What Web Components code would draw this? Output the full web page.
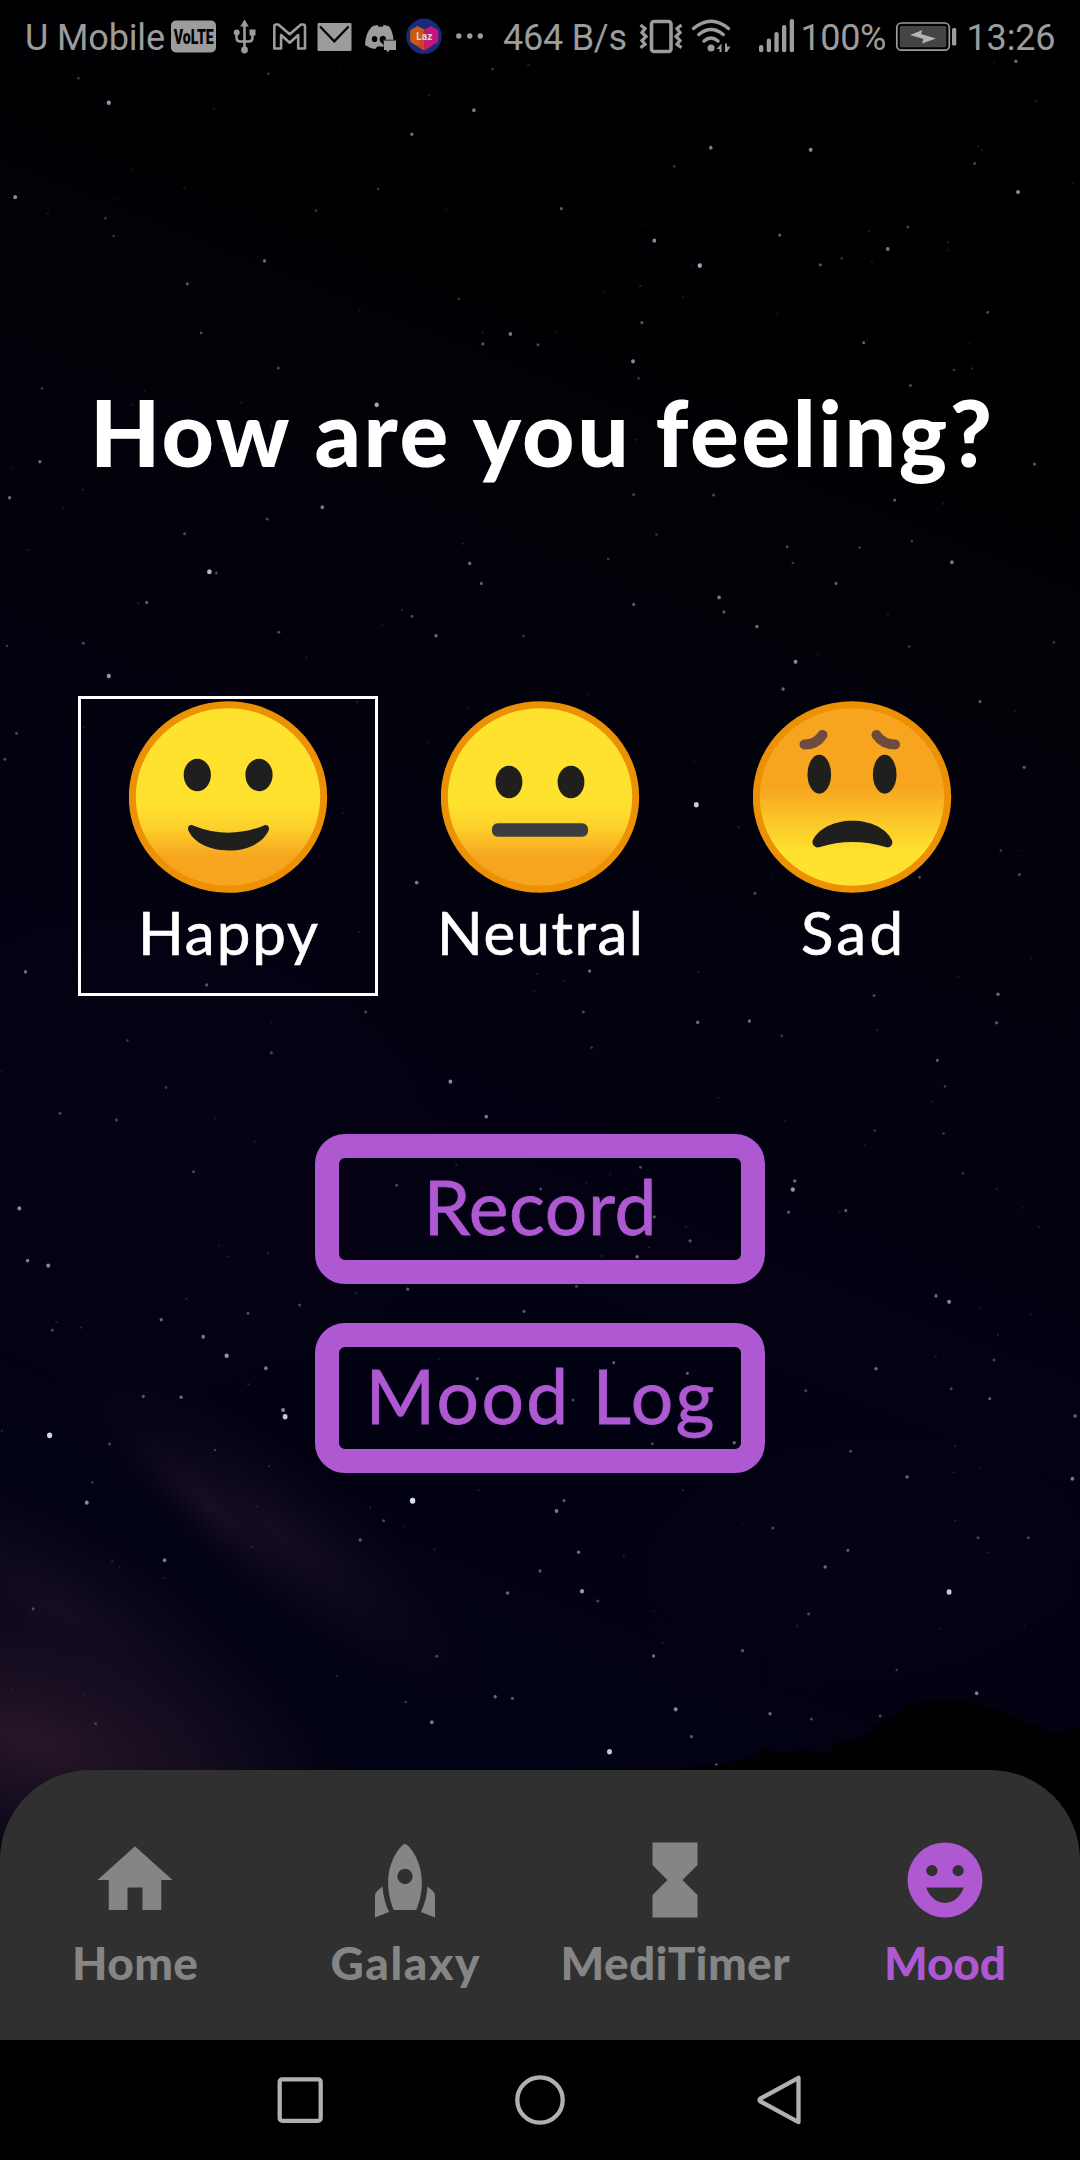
<!DOCTYPE html>
<html lang="en">
<head>
<meta charset="utf-8">
<title>Mood</title>
<style>
html,body{margin:0;padding:0;background:#000}
body{width:1080px;height:2160px;overflow:hidden;font-family:Lato,"Open Sans",sans-serif}
</style>
</head>
<body>
<mood-app></mood-app>
<script>
const define = (name, html, setup) => customElements.define(name, class extends HTMLElement {
  connectedCallback() {
    if (this.shadowRoot) return;
    const root = this.attachShadow({ mode: 'open' });
    root.innerHTML = typeof html === 'function' ? html(this) : html;
    if (setup) setup(this, root);
  }
});

// Tracks its text out (or in) so that the line takes exactly the given width.
define('fit-text', `
<style>
:host{display:inline-block;white-space:nowrap;flex:none}
</style><slot></slot>`, el => {
  const target = +el.getAttribute('width');
  const n = el.textContent.length;
  const ls = (target - el.getBoundingClientRect().width) / (n - 1);
  el.style.letterSpacing = ls + 'px';
  el.style.marginRight = -ls + 'px';
});

// Night sky: each band is [top, vertical scale, stars as x,y,brightness].
const BANDS = [
  [60, 2.529, [158,108,9, 22,347,8, 688,127,7, 598,188,6, 1032,222,7, 1177,227,8, 1478,334,8, 1415,262,4, 1475,3,6, 950,457,8, 1016,520,10, 1132,443,5, 1289,478,7, 1191,518,5, 1222,502,3, 1318,422,4, 384,508,6, 272,566,5, 292,690,4, 404,779,4, 701,718,5, 741,693,7, 781,720,4, 932,664,5, 919,762,8, 927,805,3, 1254,715,5, 1434,638,4, 547,872,10, 61,831,3, 58,1016,6, 14,1107,6, 468,1131,7, 388,1161,4, 268,1198,4, 304,1294,11, 314,1297,4, 213,1372,5, 682,1273,6, 699,1324,5, 1044,1359,7, 1051,1396,5, 920,1377,5, 1099,1433,6, 1382,1270,7, 1214,1324,5, 1143,1231,4, 1155,1522,8, 158,1558,9, 633,1456,6, 121,1475,4, 405,1447,4, 598,1407,4, 760,1457,3, 1299,1113,5, 1036,1100,4, 920,1099,4, 1502,1022,5, 815,376,5, 549,326,3, 459,381,3, 153,400,3, 165,445,3, 114,46,3, 390,35,3, 715,23,3, 979,269,3, 666,604,3, 1322,823,4, 1385,784,3, 883,1262,3, 953,1200,3, 1151,1272,3, 1248,1233,3, 1324,1217,3, 1530,1473,3, 1320,1483,3, 10,1482,3]],
  [660, 2.376, [1137,69,6, 1423,99,5, 1011,344,12, 605,529,7, 1487,255,5, 1453,453,3, 1480,510,4, 1335,516,4, 1096,554,4, 24,174,4, 7,236,4, 37,741,6, 300,772,5, 531,836,4, 856,739,6, 847,836,4, 1013,861,6, 1088,858,6, 1135,893,3, 1269,797,4, 1449,794,6, 1447,862,5, 1361,951,5, 1372,1013,3, 654,1002,8, 706,1085,7, 87,1077,4, 169,1093,4, 281,1216,4, 394,933,4, 241,1016,3, 28,1303,8, 40,1427,7, 70,1439,8, 1154,1238,6, 1151,1258,9, 1145,1312,5, 1228,1308,5, 930,1205,4, 785,1257,4, 576,1248,4, 950,1323,5, 1002,1380,5, 925,1418,6, 592,1495,5, 837,1488,4, 1359,1511,6, 1378,1525,8, 1270,1118,3, 1370,1125,3, 1398,1220,3, 185,904,3, 859,921,3]],
  [1300, 3, [761,34,5, 234,59,6, 76,91,4, 295,110,7, 329,167,9, 386,205,7, 208,289,5, 263,292,6, 411,330,8, 414,350,12, 72,406,13, 126,608,8, 159,432,4, 599,602,14, 819,602,5, 808,633,7, 557,662,4, 523,720,5, 239,781,7, 840,757,6, 784,813,5, 737,879,6, 845,874,9, 868,903,4, 1378,876,12, 1198,801,6, 1231,751,5, 1122,684,4, 1420,713,4, 1493,713,4, 1317,531,6, 1557,536,7, 1272,206,6, 1443,180,4, 1437,296,5, 1381,266,4, 1170,272,4, 1235,454,4, 1561,348,6, 1174,942,4, 1078,1052,5, 949,1068,6, 634,1069,4, 48,926,4, 719,1190,6, 744,1195,5, 627,1267,7, 885,1355,12, 981,1228,8, 1118,1241,6, 1178,1257,4, 1004,1310,5, 1040,1396,6, 1418,1180,7, 1278,1248,4, 589,1206,3, 139,1271,3, 891,188,5, 998,220,5, 693,236,5, 832,300,4, 778,318,6, 1066,428,6, 947,431,4, 360,40,4, 435,15,4, 134,547,3, 312,450,3, 1302,1110,3]]
];
const sky = () => {
  let s = '', seed = 7;
  const rnd = () => (seed = (seed * 16807) % 2147483647) / 2147483647;
  for (let i = 0; i < 150; i++)
    s += `<circle cx="${(rnd()*1080).toFixed(1)}" cy="${(60+rnd()*1640).toFixed(1)}" r="1.2" fill="#aab" opacity="${(.08+rnd()*.12).toFixed(2)}"/>`;
  for (const [top, k, list] of BANDS)
    for (let i = 0; i < list.length; i += 3) {
      const b = list[i+2], x = (list[i]/1.4519).toFixed(1), y = (top + list[i+1]/k).toFixed(1);
      s += `<ellipse cx="${x}" cy="${y}" rx="${(.9+b*.13).toFixed(2)}" ry="${(.9+b*.15).toFixed(2)}" fill="#dfe0ee" opacity="${Math.min(1,.05+b*.07).toFixed(2)}"/>`;
    }
  return s;
};
define('night-sky', () => `
<style>:host{display:block}svg{display:block}</style>
<svg width="1080" height="2160" viewBox="0 0 1080 2160">
<defs>
<linearGradient id="b" x1=".6" y1="0" x2=".4" y2="1"><stop offset="0" stop-color="#000"/><stop offset=".15" stop-color="#010104"/><stop offset=".36" stop-color="#02020d"/><stop offset=".55" stop-color="#030112"/><stop offset=".8" stop-color="#010213"/></linearGradient>
<radialGradient id="p"><stop offset="0" stop-color="#2a172a" stop-opacity=".95"/><stop offset=".5" stop-color="#1e1124" stop-opacity=".65"/><stop offset="1" stop-color="#120a20" stop-opacity="0"/></radialGradient>
<radialGradient id="q"><stop offset="0" stop-color="#1c1029" stop-opacity=".75"/><stop offset="1" stop-color="#140a22" stop-opacity="0"/></radialGradient>
<radialGradient id="v"><stop offset="0" stop-color="#080316" stop-opacity=".7"/><stop offset="1" stop-color="#060216" stop-opacity="0"/></radialGradient>
</defs>
<rect width="1080" height="2160" fill="url(#b)"/>
<ellipse cx="150" cy="1160" rx="330" ry="300" fill="url(#v)"/>
<ellipse cx="850" cy="1570" rx="260" ry="140" fill="url(#v)"/>
<ellipse cx="280" cy="1535" rx="270" ry="75" fill="url(#q)" transform="rotate(38 280 1535)"/>
<ellipse cx="210" cy="1505" rx="120" ry="30" fill="url(#q)" transform="rotate(42 210 1505)"/>
<ellipse cx="60" cy="1610" rx="300" ry="100" fill="url(#q)" transform="rotate(30 60 1610)"/>
<ellipse cx="30" cy="1740" rx="360" ry="150" fill="url(#p)" transform="rotate(16 30 1740)"/>
${sky()}
<path d="M670 1775l19-8 30-2 35-8 10-9 14 5 14-1 16-2 22 5 7-12 14-2 13-5 11-10 20-10 12-11 16-3 41-1 35 9 34 15 24 8 23-6V2160H670z" fill="#010102"/>
</svg>`);

define('status-bar', `
<style>
:host{display:flex;height:75px;align-items:stretch;padding-left:25px;box-sizing:border-box;width:1080px;color:#9c9c9c;font:36px/77px Roboto,sans-serif}
svg{display:block;flex:none;height:75px;fill:currentColor;overflow:visible}
.c{display:flex;flex:none;justify-content:center}
</style>
<div class="c" style="width:140px"><fit-text width="140">U Mobile</fit-text></div>
<svg style="margin-left:6px" width="46" viewBox="171 0 46 75"><rect x="171" y="20.5" width="45" height="32" rx="5"/><text x="193.7" y="44" text-anchor="middle" textLength="40" lengthAdjust="spacingAndGlyphs" font-family="Roboto" font-weight="900" font-size="20.5" fill="#000" style="line-height:1">VoLTE</text></svg>
<svg style="margin-left:16px" width="23" viewBox="233 0 23 75"><g fill="none" stroke="currentColor" stroke-width="2.6"><path d="M244.5 26v24M236.500 33v4.500q0 4 4 4h8q4 0 4-4V33"/></g><path d="M244.500 19.500l4.300 7h-8.600z"/><circle cx="244.500" cy="50" r="3.400"/><circle cx="236.700" cy="32.500" r="3"/><rect x="249.500" y="29.500" width="6" height="6"/></svg>
<svg style="margin-left:16px" width="36" viewBox="272 0 36 75"><path d="M274.300 26.500q0-2 2-2h2l11.400 9.800L301 24.500h2q2 0 2 2V48.500h-6.800V35l-8.500 7.700-8.600-7.700v13.500h-6.800z" fill="none" stroke="currentColor" stroke-width="2.600" stroke-linejoin="round"/></svg>
<svg style="margin-left:9px" width="35" viewBox="317 0 35 75"><rect x="317.500" y="23" width="34" height="28" rx="1"/><path d="M320 26.500l14.300 14.800 14.300-14.800" fill="none" stroke="#000" stroke-width="2.200"/></svg>
<svg style="margin-left:12px" width="34" viewBox="364 0 34 75"><path d="M372 26.500q3-1.500 5.500-1.500l1 1.700h4l1.200-1.700q3 .2 5.600 1.500 3.500 5 4.200 13.200H383.500v7.200l-2-.3-4-.1-2.500 2.500q-5.500-.7-10-4 .3-12 7-18.500z"/><ellipse cx="374.600" cy="39" rx="2.800" ry="3.100" fill="#000"/><path d="M380 41.500q-1.500-5.500 3.200-5.700 3 .5 2.800 3.900h-2.500v5z" fill="#000"/><path d="M384 40.500h12v9.500h-6.500l-2 2.500-1-2.500H384z"/></svg>
<svg style="margin-left:8px" width="36" viewBox="406 0 36 75"><circle cx="424" cy="36.300" r="17.700" fill="#162c78"/><path d="M410.500 30l7-4 6.700 3.500v21L410.500 42q-1-6 0-12z" fill="#ca5a10"/><path d="M438 30l-7-4-6.800 3.500v21L438 42q1-6 0-12z" fill="#c2167c"/><path d="M417.500 47l6.700-17 6.700 17-6.700 3.800z" fill="#d6234a" opacity=".45"/><text x="424.300" y="40" text-anchor="middle" textLength="16" font-family="Roboto" font-weight="700" font-size="10" fill="#ddd">Laz</text></svg>
<svg style="margin-left:14px" width="27" viewBox="456 0 27 75"><circle cx="458.800" cy="36" r="2.700"/><circle cx="469.800" cy="36" r="2.700"/><circle cx="480.300" cy="36" r="2.700"/></svg>
<div class="c" style="width:124px;margin-left:20px"><fit-text width="124">464 B/s</fit-text></div>
<svg style="margin-left:12px" width="44" viewBox="639 0 44 75"><g fill="none" stroke="currentColor"><rect x="651.500" y="21.500" width="19.500" height="30" rx="2.500" stroke-width="3.600"/><path stroke-width="3.200" d="M640.500 25l4.500 3.500-3 4 4 4-4 4 3 3.700-4.500 3.500M681.500 25l-4.500 3.500 3 4-4 4 4 4-3 3.700 4.500 3.500"/></g></svg>
<svg style="margin-left:8px" width="42" viewBox="691 0 42 75"><g fill="none" stroke="currentColor" stroke-width="3.500" stroke-linecap="round"><path d="M693.500 28.500q17.500-14.500 35 0M698.800 34.500q12.200-10 24.400 0M704 41q7-6 14 0"/></g><circle cx="711" cy="48" r="3.500"/><path d="M721.500 43.500V52h-2v-3h-3zM725 43.500V52h2l3.500-5.500H727v-3z"/></svg>
<svg style="margin-left:25px" width="37" viewBox="758 0 37 75"><rect x="759" y="45" width="4.300" height="7.300" rx="2"/><rect x="766.700" y="38.500" width="4.300" height="13.800" rx="2"/><rect x="774.400" y="32" width="4.300" height="20.300" rx="2"/><rect x="782" y="25" width="4.300" height="27.300" rx="2"/><rect x="789.700" y="19" width="4.300" height="33.300" rx="2"/></svg>
<div class="c" style="width:87px;margin-left:5px"><fit-text width="86">100%</fit-text></div>
<svg style="margin-left:8px" width="63" viewBox="895 0 63 75"><rect x="896.800" y="23" width="52.500" height="27.200" rx="4.500" fill="none" stroke="currentColor" stroke-width="1.700"/><rect x="899.800" y="26" width="46.500" height="21.200" rx="1.500" fill="#444"/><path fill="#b4b4b4" d="M910 35l12.500-5-1.500 4 15 4.500-14 5 1.500-4.500z"/><rect x="952" y="28" width="4.300" height="17.500" rx="1.500"/></svg>
<div class="c" style="width:90px;margin-left:8px"><fit-text width="89">13:26</fit-text></div>
`);

const grad = (id, stops) => `<defs><linearGradient id="${id}" x1="0" y1="0" x2="0" y2="1">${stops}</linearGradient></defs><ellipse cx="99" cy="96" rx="95.700" ry="92.300" fill="url(#${id})" stroke="#ec9104" stroke-width="7"/>`;
const SUN = grad('g', '<stop offset=".53" stop-color="#ffe22e"/><stop offset=".66" stop-color="#fdd12b"/><stop offset=".83" stop-color="#f7a41f"/>');
const FACES = {
  happy: SUN + '<g fill="#1f1f1d"><ellipse cx="68.300" cy="74" rx="13.600" ry="16.200"/><ellipse cx="130" cy="74" rx="13.600" ry="16.200"/><path d="M64 124.400q35.500 14.500 71 0c3.500-1.200 6 1.400 4.600 5.200C134 142 118.500 149.500 99.500 149.500S65 142 59.400 129.600c-1.400-3.800 1.100-6.400 4.600-5.200z"/></g>',
  neutral: SUN + '<g fill="#1f1f1d"><ellipse cx="68" cy="81" rx="13.400" ry="16.200"/><ellipse cx="130" cy="81" rx="13.400" ry="16.200"/></g><rect x="51" y="122.300" width="96" height="13.400" rx="5.500" fill="#3d3d3d"/>',
  sad: grad('h', '<stop offset=".44" stop-color="#f7a41f"/><stop offset=".63" stop-color="#fbc628"/><stop offset=".8" stop-color="#ffe22e"/>') + '<g fill="none" stroke="#6e4b3f" stroke-width="10" stroke-linecap="round"><path d="M51.500 43.500Q63.500 43.500 69.500 34M142 43.500Q130 43.500 123.500 34"/></g><g fill="#1f1f1d"><ellipse cx="66.300" cy="73.300" rx="11.800" ry="19.500"/><ellipse cx="131.700" cy="73.300" rx="11.800" ry="19.500"/><path d="M66 146.300q33.500-10.500 67.500 0c4 .8 7-3 5.500-7C133.500 127.500 118 119.700 99.500 119.700S65.500 127.500 59.800 139.300c-1.500 4 2.200 7.800 6.200 7z"/></g>'
};
define('mood-option', el => `
<style>
:host{display:flex;flex-direction:column;align-items:center;box-sizing:border-box;width:300px;height:300px;border:3px solid transparent;padding-top:2px;color:#fff;font-size:60px;line-height:64px;-webkit-text-stroke:.7px currentColor}
:host([selected]){border-color:#fff}
svg{display:block;margin-bottom:7px}
</style>
<svg width="199" height="192" viewBox="0 0 199 192">${FACES[el.getAttribute('face')]}</svg>
<fit-text width="${el.getAttribute('span')}">${el.getAttribute('label')}</fit-text>`);

define('outline-button', `
<style>
:host{display:flex;justify-content:center;box-sizing:border-box;width:450px;height:150px;border:24px solid #ae58d1;border-radius:30px;color:#ae58d1;font-size:75px;line-height:96px;-webkit-text-stroke:.8px currentColor}
</style><slot></slot>`);

const ICONS = {
  home: '<path d="M10 20v-6h4v6h5v-8h3L12 3 2 12h3v8z"/>',
  rocket: '<path fill-rule="evenodd" d="M12 2.300c.6 0 4.500 3.700 4.500 10.500 0 2.700-.7 5.300-1.500 7.200H9c-.8-1.900-1.500-4.500-1.500-7.200C7.500 6 11.400 2.300 12 2.300zM12 9a2.050 2.050 0 1 0 0 4.100A2.050 2.050 0 0 0 12 9z"/><path d="M4 22l3.750-1.500C6.800 18.500 6.150 16.200 6 13.700l-1.200 1C4.300 15.100 4 15.600 4 16.300zM20 22l-3.750-1.500c.95-2 1.600-4.300 1.750-6.800l1.200 1c.5.400.8.900.8 1.600z"/>',
  sand: '<path d="M6 2v6h.01L6 8.010 10 12l-4 4 .01.01H6V22h12v-5.990h-.01L18 16l-4-4 4-3.990-.01-.01H18V2H6z"/>',
  smile: '<path fill-rule="evenodd" d="M12 2a10 10 0 1 0 0 20 10 10 0 0 0 0-20zM8.500 8a1.500 1.500 0 1 1 0 3 1.500 1.500 0 0 1 0-3zM15.500 8a1.500 1.500 0 1 1 0 3 1.500 1.500 0 0 1 0-3zM7 14h10c-.8 2.400-2.700 4.100-5 4.100S7.800 16.400 7 14z"/>'
};
define('tab-item', el => `
<style>
:host{display:flex;flex-direction:column;align-items:center;gap:14px;flex:1;color:#858585;font-size:46px;font-weight:900;line-height:48px}
:host([active]){color:#ae58d1}
svg{display:block;fill:currentColor}
</style>
<svg width="90" height="90" viewBox="0 0 24 24">${ICONS[el.getAttribute('icon')]}</svg>
<fit-text width="${el.getAttribute('span')}">${el.getAttribute('label')}</fit-text>`);

define('tab-bar', `
<style>:host{display:flex;box-sizing:border-box;height:270px;padding-top:65px;background:#303030;border-radius:90px 90px 0 0}</style><slot></slot>`);

define('system-nav', `
<style>:host{display:flex;height:120px;background:#000;padding:0 270px 0 270px;justify-content:space-between;align-items:center;box-sizing:border-box}
svg{fill:none;stroke:#b0b0b0;stroke-width:4.300;stroke-linejoin:round;display:block}</style>
<svg width="60" height="60" viewBox="0 0 60 60"><rect x="9.700" y="9.300" width="41" height="41.500" rx="2.500"/></svg>
<svg width="60" height="60" viewBox="0 0 60 60"><circle cx="30" cy="30" r="22.700"/></svg>
<svg width="60" height="60" viewBox="0 0 60 60"><path d="M48.500 7.800v44.400L10.500 31.500q-2-1.500 0-3z"/></svg>
`);

define('mood-app', `
<style>
:host{display:grid;width:1080px;height:2160px;overflow:hidden}
night-sky,main{grid-area:1/1}
main{display:flex;flex-direction:column;height:2160px;z-index:1}
h1{margin:302px 0 0;display:flex;justify-content:center;padding-left:2px;font-size:91px;line-height:110px;font-weight:900;color:#fff}
.moods{display:flex;gap:12px;justify-content:center;margin-top:209px}
.actions{display:flex;flex-direction:column;align-items:center;gap:39px;margin-top:138px}
tab-bar{margin-top:297px}
</style>
<night-sky></night-sky>
<main>
<status-bar></status-bar>
<h1><fit-text width="902">How are you feeling?</fit-text></h1>
<div class="moods">
<mood-option face="happy" label="Happy" span="180" selected></mood-option>
<mood-option face="neutral" label="Neutral" span="206"></mood-option>
<mood-option face="sad" label="Sad" span="102"></mood-option>
</div>
<div class="actions">
<outline-button><fit-text width="233">Record</fit-text></outline-button>
<outline-button><fit-text width="349">Mood Log</fit-text></outline-button>
</div>
<tab-bar>
<tab-item icon="home" label="Home" span="126"></tab-item>
<tab-item icon="rocket" label="Galaxy" span="149"></tab-item>
<tab-item icon="sand" label="MediTimer" span="229"></tab-item>
<tab-item icon="smile" label="Mood" span="122" active></tab-item>
</tab-bar>
<system-nav></system-nav>
</main>`);
</script>
</body>
</html>
